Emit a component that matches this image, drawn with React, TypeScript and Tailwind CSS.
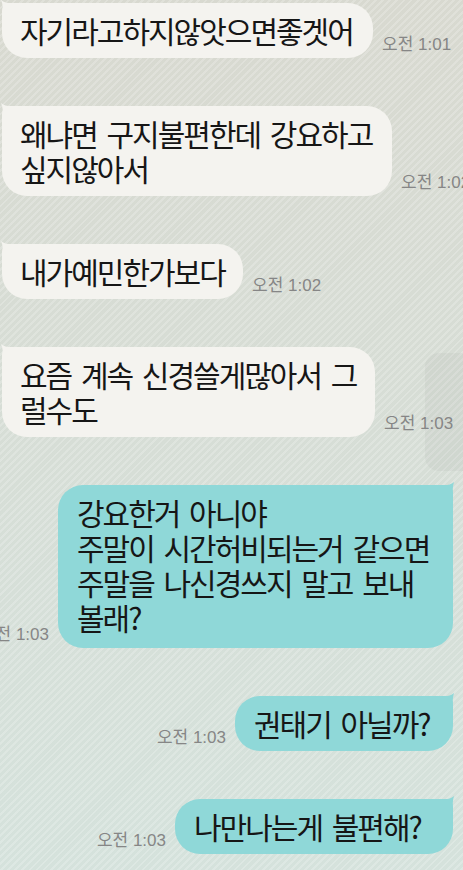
import type { ReactNode } from 'react';

type Msg = {
  id: number;
  mine: boolean;
  lines: string[];
  time: string;
  width: string;
  pad: string;
};

const messages: Msg[] = [
  { id: 1, mine: false, lines: ['자기라고하지않앗으면좋겟어'], time: '오전 1:01', width: 'w-[371px]', pad: 'pt-[10px] pb-[10px]' },
  { id: 2, mine: false, lines: ['왜냐면 구지불편한데 강요하고', '싶지않아서'], time: '오전 1:02', width: 'w-[390px]', pad: 'pt-[10px] pb-[10px]' },
  { id: 3, mine: false, lines: ['내가예민한가보다'], time: '오전 1:02', width: 'w-[241px]', pad: 'pt-[10px] pb-[10px]' },
  { id: 4, mine: false, lines: ['요즘 계속 신경쓸게많아서 그', '럴수도'], time: '오전 1:03', width: 'w-[373px]', pad: 'pt-[10px] pb-[10px]' },
  {
    id: 5,
    mine: true,
    lines: ['강요한거 아니야', '주말이 시간허비되는거 같으면', '주말을 나신경쓰지 말고 보내', '볼래?'],
    time: '오전 1:03',
    width: 'w-[395px]',
    pad: 'pt-[10px] pb-[13px]',
  },
  { id: 6, mine: true, lines: ['권태기 아닐까?'], time: '오전 1:03', width: 'w-[218px]', pad: 'pt-[10px] pb-[10px]' },
  { id: 7, mine: true, lines: ['나만나는게 불편해?'], time: '오전 1:03', width: 'w-[278px]', pad: 'pt-[10px] pb-[10px]' },
];

function Time({ children }: { children: ReactNode }) {
  return (
    <span className="mb-[3px] shrink-0 whitespace-nowrap font-['Liberation_Sans','Noto_Sans_CJK_KR',sans-serif] text-[17px] leading-[20px] text-[#868686]">
      {children}
    </span>
  );
}

function Bubble({ msg }: { msg: Msg }) {
  return (
    <div
      className={`relative shrink-0 ${msg.width} ${msg.pad} rounded-[25px] font-['Noto_Sans_CJK_KR',sans-serif] text-[30px] leading-[35px] tracking-[-2px] text-[#161616] ${
        msg.mine ? 'rounded-tr-[8px] bg-[#8fd8d8] pl-[19px] pr-[20px]' : 'rounded-tl-[8px] bg-[#f4f3ef] pl-[18px] pr-[18px]'
      }`}
    >
      {msg.mine ? (
        <svg className="absolute -right-[3px] -top-[3px]" width="14" height="16" viewBox="0 0 14 16">
          <path d="M0 3 Q7 4 12 0 Q10 6 11 16 L0 16 Z" fill="#8fd8d8" />
        </svg>
      ) : (
        <svg className="absolute -left-[2px] -top-[3px]" width="14" height="16" viewBox="0 0 14 16">
          <path d="M14 3 Q6 4 1 0 Q4 6 2 16 L14 16 Z" fill="#f4f3ef" />
        </svg>
      )}
      <div className="relative">
        {msg.lines.map((l, i) => (
          <div key={i} className="whitespace-nowrap [word-spacing:5px]">
            {l}
          </div>
        ))}
      </div>
    </div>
  );
}

export default function App() {
  return (
    <div className="relative h-[870px] w-[463px] overflow-hidden bg-[image:repeating-linear-gradient(135deg,rgba(255,255,255,0.2)_0_2px,transparent_2px_5px),linear-gradient(to_bottom,#d8d9d0,#d5e2dc)]">
      {/* faded panel on the right edge */}
      <div className="absolute left-[425px] top-[353px] h-[118px] w-[60px] rounded-[14px] bg-[rgba(0,0,0,0.03)]" />

      <div className="relative flex flex-col gap-[48px] pt-[3px]">
        {messages.map((m) =>
          m.mine ? (
            <div key={m.id} className="flex items-end justify-end gap-[9px] pr-[10px]">
              <Time>{m.time}</Time>
              <Bubble msg={m} />
            </div>
          ) : (
            <div key={m.id} className="flex items-end gap-[9px] pl-[2px]">
              <Bubble msg={m} />
              <Time>{m.time}</Time>
            </div>
          )
        )}
      </div>
    </div>
  );
}
